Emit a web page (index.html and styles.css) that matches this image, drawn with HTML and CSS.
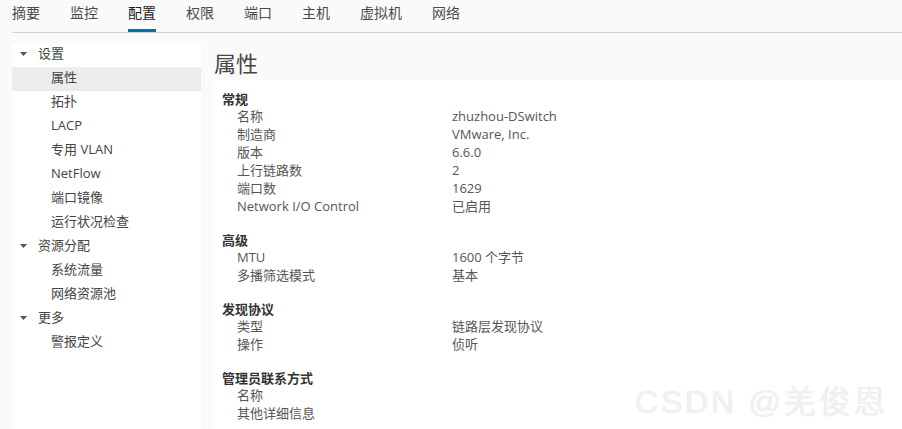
FILE: index.html
```html
<!DOCTYPE html>
<html lang="zh-CN">
<head>
<meta charset="utf-8">
<title>属性</title>
<link rel="stylesheet" href="styles.css">
</head>
<body>
<div class="page">
  <nav class="tabs">
    <span class="tab">摘要</span>
    <span class="tab">监控</span>
    <span class="tab active">配置</span>
    <span class="tab">权限</span>
    <span class="tab">端口</span>
    <span class="tab">主机</span>
    <span class="tab">虚拟机</span>
    <span class="tab">网络</span>
  </nav>
  <div class="main">
    <aside class="sidebar">
      <div class="group"><svg class="caret" width="7" height="4" viewBox="0 0 7 4"><path d="M0 0H7L3.5 4Z"/></svg>设置</div>
      <div class="item selected">属性</div>
      <div class="item">拓扑</div>
      <div class="item">LACP</div>
      <div class="item">专用 VLAN</div>
      <div class="item">NetFlow</div>
      <div class="item">端口镜像</div>
      <div class="item">运行状况检查</div>
      <div class="group"><svg class="caret" width="7" height="4" viewBox="0 0 7 4"><path d="M0 0H7L3.5 4Z"/></svg>资源分配</div>
      <div class="item">系统流量</div>
      <div class="item">网络资源池</div>
      <div class="group"><svg class="caret" width="7" height="4" viewBox="0 0 7 4"><path d="M0 0H7L3.5 4Z"/></svg>更多</div>
      <div class="item">警报定义</div>
    </aside>
    <section class="content">
      <h1 class="title">属性</h1>
      <div class="panel">
        <div class="section">
          <div class="sec-head">常规</div>
          <div class="row"><span class="label">名称</span><span class="value">zhuzhou-DSwitch</span></div>
          <div class="row"><span class="label">制造商</span><span class="value">VMware, Inc.</span></div>
          <div class="row"><span class="label">版本</span><span class="value">6.6.0</span></div>
          <div class="row"><span class="label">上行链路数</span><span class="value">2</span></div>
          <div class="row"><span class="label">端口数</span><span class="value">1629</span></div>
          <div class="row"><span class="label">Network I/O Control</span><span class="value">已启用</span></div>
        </div>
        <div class="section">
          <div class="sec-head">高级</div>
          <div class="row"><span class="label">MTU</span><span class="value">1600 个字节</span></div>
          <div class="row"><span class="label">多播筛选模式</span><span class="value">基本</span></div>
        </div>
        <div class="section">
          <div class="sec-head">发现协议</div>
          <div class="row"><span class="label">类型</span><span class="value">链路层发现协议</span></div>
          <div class="row"><span class="label">操作</span><span class="value">侦听</span></div>
        </div>
        <div class="section">
          <div class="sec-head">管理员联系方式</div>
          <div class="row"><span class="label">名称</span><span class="value"></span></div>
          <div class="row"><span class="label">其他详细信息</span><span class="value"></span></div>
        </div>
      </div>
    </section>
  </div>
  <div class="watermark">CSDN @羌俊恩</div>
</div>
</body>
</html>
```

FILE: styles.css
```css
html, body {
  margin: 0;
  padding: 0;
  background: #fafafa;
  height: 100%;
  overflow: hidden;
}

.page {
  position: relative;
  height: 100vh;
  padding-left: 12px;
  box-sizing: border-box;
  font-family: "Open Sans", "Noto Sans CJK SC", sans-serif;
  color: #565656;
}

.tabs {
  display: flex;
  gap: 30px;
  height: 33px;
  box-sizing: border-box;
  border-bottom: 1px solid #d4d4d4;
}

.tab {
  font-size: 14px;
  line-height: 26px;
  height: 32px;
  box-sizing: border-box;
  color: #4a4a4a;
}

.tab.active {
  color: #222;
  box-shadow: inset 0 -3px 0 #0072a3;
}

.main {
  display: flex;
  gap: 11px;
  margin-top: 10px;
  height: calc(100vh - 43px);
}

.sidebar {
  width: 189px;
  flex: none;
  background: #fff;
  font-size: 13px;
  color: #444;
}

.group {
  height: 24px;
  line-height: 21px;
  padding: 0 0 3px 8px;
  box-sizing: border-box;
  display: flex;
  align-items: center;
}

.caret {
  fill: #555;
  margin-right: 11px;
  margin-top: 1px;
}

.item {
  height: 24px;
  line-height: 21px;
  padding: 0 0 3px 39px;
  box-sizing: border-box;
}

.item.selected {
  background: #ececec;
}

.content {
  flex: 1;
  display: flex;
  flex-direction: column;
  min-width: 0;
}

.title {
  margin: 0;
  padding: 4px 0 0 2px;
  height: 37px;
  box-sizing: border-box;
  font-size: 22px;
  line-height: 33px;
  font-weight: normal;
  color: #454545;
}

.panel {
  flex: 1;
  background: #fff;
  padding: 11px 0 0 10px;
}

.section + .section {
  margin-top: 17px;
}

.sec-head {
  font-size: 13px;
  font-weight: bold;
  line-height: 16px;
  color: #333;
}

.row {
  display: grid;
  grid-template-columns: 230px 1fr;
  font-size: 13px;
  line-height: 18px;
}

.label {
  padding-left: 15px;
}

.watermark {
  position: absolute;
  left: 635px;
  top: 376px;
  font-family: "Liberation Sans", "Noto Sans CJK SC", sans-serif;
  font-size: 32px;
  letter-spacing: 2.8px;
  color: #f1f1f1;
  text-shadow: 0 0 1px #dcdcdc;
  white-space: nowrap;
}
```
